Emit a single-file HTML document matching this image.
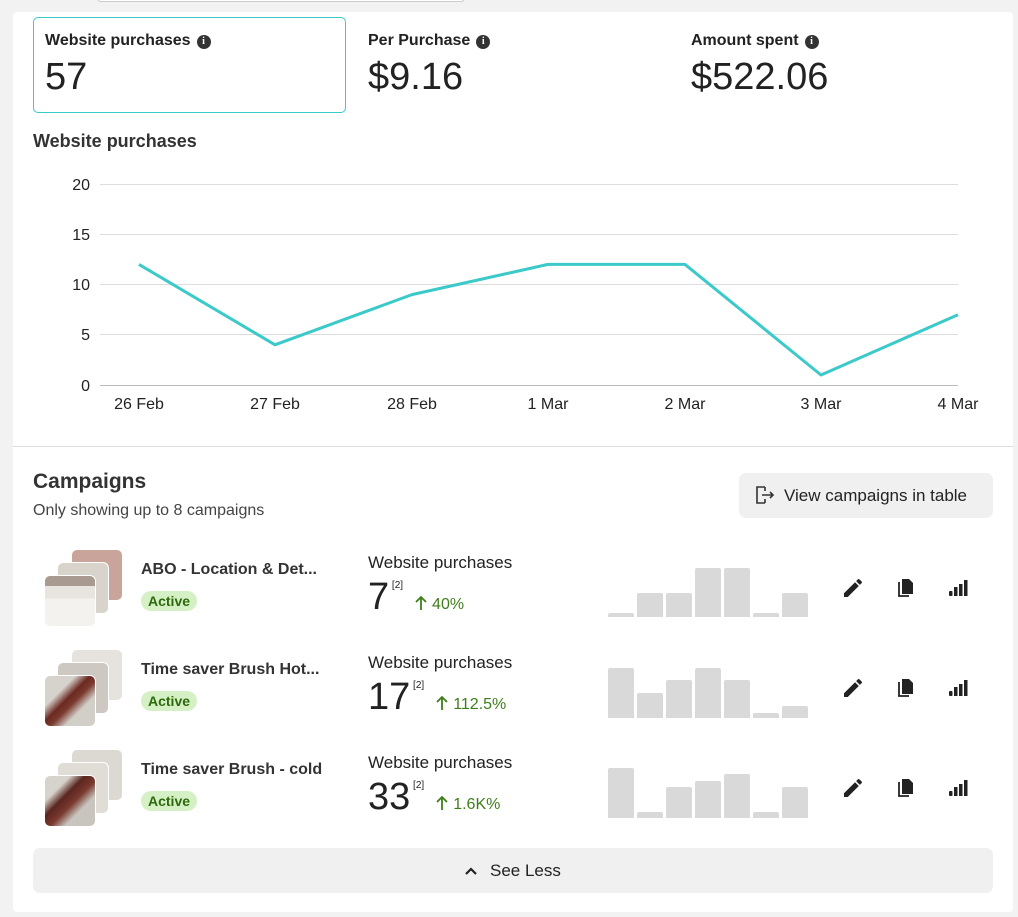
<!DOCTYPE html>
<html><head><meta charset="utf-8"><style>
*{margin:0;padding:0;box-sizing:border-box}
body{width:1018px;height:917px;background:#f2f2f2;font-family:"Liberation Sans",Roboto,sans-serif;color:#222;position:relative;overflow:hidden}
.a{position:absolute}
.card{left:13px;top:12px;width:1000px;height:900px;background:#fff;border-radius:4px}
.lbl{font-size:16px;font-weight:bold;color:#222}
.big{font-size:38px;color:#222}
.info{display:inline-block;width:14px;height:14px;border-radius:50%;background:#333;color:#fff;font-size:10px;text-align:center;line-height:14px;font-weight:bold;vertical-align:1px;margin-left:6px;font-family:"Liberation Serif",serif}
.bar{position:absolute;background:#d9d9d9;width:26px;border-radius:2px 2px 0 0}
.title{font-size:16px;font-weight:bold;color:#333}
.badge{background:#d5f0c4;color:#2d6a0e;font-size:14px;font-weight:bold;padding:2px 7px;border-radius:11px}
.wp{font-size:17px;color:#222}
.num{font-size:38px;color:#222}
.sup{font-size:10px;vertical-align:top;position:relative;top:4px}
.pct{font-size:16px;color:#3f7d1a}
.th{position:absolute;width:52px;height:52px;border-radius:6px;border:1.5px solid #fff}
</style></head><body>
<div class="a" style="left:97px;top:-10px;width:368px;height:12px;border:1px solid #ccc;border-radius:4px;background:#fff"></div>
<div class="a card"></div>
<div class="a" style="left:33px;top:17px;width:313px;height:96px;border:1px solid #3cc9c9;border-radius:5px"></div>
<div class="a lbl" style="left:45px;top:32px">Website purchases<span class="info">i</span></div>
<div class="a big" style="left:45px;top:56px">57</div>
<div class="a lbl" style="left:368px;top:32px">Per Purchase<span class="info">i</span></div>
<div class="a big" style="left:368px;top:56px">$9.16</div>
<div class="a lbl" style="left:691px;top:32px">Amount spent<span class="info">i</span></div>
<div class="a big" style="left:691px;top:56px">$522.06</div>
<div class="a" style="left:33px;top:131px;font-size:18px;font-weight:bold;color:#333">Website purchases</div>
<svg class="a" style="left:0;top:0" width="1018" height="447">
<g stroke="#ddd" stroke-width="1">
<line x1="100" y1="184.5" x2="958" y2="184.5"/><line x1="100" y1="234.5" x2="958" y2="234.5"/><line x1="100" y1="284.5" x2="958" y2="284.5"/><line x1="100" y1="334.5" x2="958" y2="334.5"/><line x1="100" y1="385.5" x2="958" y2="385.5" stroke="#bbb"/>
</g>
<g font-family="Liberation Sans,sans-serif" font-size="16" fill="#222" text-anchor="end">
<text x="90" y="190">20</text><text x="90" y="240">15</text><text x="90" y="290">10</text><text x="90" y="340">5</text><text x="90" y="391">0</text>
</g>
<g font-family="Liberation Sans,sans-serif" font-size="16" fill="#222" text-anchor="middle">
<text x="139" y="409">26 Feb</text><text x="275" y="409">27 Feb</text><text x="412" y="409">28 Feb</text><text x="548" y="409">1 Mar</text><text x="685" y="409">2 Mar</text><text x="821" y="409">3 Mar</text><text x="958" y="409">4 Mar</text>
</g>
<polyline fill="none" stroke="#3cc9c9" stroke-width="3" stroke-linejoin="round" points="139,264.4 275,344.8 412,294.6 548,264.4 685,264.4 821,375 958,314.7"/>
</svg>
<div class="a" style="left:13px;top:446px;width:1000px;height:1px;background:#ddd"></div>
<div class="a" style="left:33px;top:470px;font-size:21px;font-weight:bold;color:#333">Campaigns</div>
<div class="a" style="left:33px;top:502px;font-size:16px;color:#444">Only showing up to 8 campaigns</div>
<div class="a" style="left:739px;top:473px;width:254px;height:45px;background:#f0f0f0;border-radius:7px"></div>
<svg class="a" style="left:753px;top:484px" width="22" height="22" viewBox="0 0 22 22" fill="none" stroke="#333" stroke-width="1.6"><path d="M12 3H4v16h8M12 3v4M12 19v-4M9 11h11M17 8l3 3-3 3"/></svg>
<div class="a" style="left:784px;top:486px;font-size:17px;color:#222">View campaigns in table</div>

<div class="th" style="left:71px;top:549px;background:#c9a49a"></div>
<div class="th" style="left:57px;top:562px;background:#d8d4cc"></div>
<div class="th" style="left:44px;top:575px;background:linear-gradient(#a89a90 0 20%,#e8e5df 20% 45%,#f4f2ee 45%)"></div>
<div class="a title" style="left:141px;top:561px">ABO - Location &amp; Det...</div>
<div class="a badge" style="left:141px;top:591px">Active</div>
<div class="a wp" style="left:368px;top:553px">Website purchases</div>
<div class="a num" style="left:368px;top:576px">7<sup class="sup"> [2]</sup> <span class="pct"><svg width="14" height="16" viewBox="0 0 14 16" style="vertical-align:-2px"><path d="M7 15V2M2 7l5-5 5 5" fill="none" stroke="#3f7d1a" stroke-width="1.8"/></svg> 40%</span></div>

<div class="th" style="left:71px;top:649px;background:#e6e3de"></div>
<div class="th" style="left:57px;top:662px;background:#cdc8c1"></div>
<div class="th" style="left:44px;top:675px;background:linear-gradient(135deg,#d6d2cc 30%,#6b2a22 45%,#7a3a2f 55%,#d2cec8 70%)"></div>
<div class="a title" style="left:141px;top:661px">Time saver Brush Hot...</div>
<div class="a badge" style="left:141px;top:691px">Active</div>
<div class="a wp" style="left:368px;top:653px">Website purchases</div>
<div class="a num" style="left:368px;top:676px">17<sup class="sup"> [2]</sup> <span class="pct"><svg width="14" height="16" viewBox="0 0 14 16" style="vertical-align:-2px"><path d="M7 15V2M2 7l5-5 5 5" fill="none" stroke="#3f7d1a" stroke-width="1.8"/></svg> 112.5%</span></div>

<div class="th" style="left:71px;top:749px;background:#dcd8d2"></div>
<div class="th" style="left:57px;top:762px;background:#e0dcd6"></div>
<div class="th" style="left:44px;top:775px;background:linear-gradient(135deg,#d6d2cc 25%,#5a2620 40%,#7a3a2f 55%,#c8c4be 70%)"></div>
<div class="a title" style="left:141px;top:761px">Time saver Brush - cold</div>
<div class="a badge" style="left:141px;top:791px">Active</div>
<div class="a wp" style="left:368px;top:753px">Website purchases</div>
<div class="a num" style="left:368px;top:776px">33<sup class="sup"> [2]</sup> <span class="pct"><svg width="14" height="16" viewBox="0 0 14 16" style="vertical-align:-2px"><path d="M7 15V2M2 7l5-5 5 5" fill="none" stroke="#3f7d1a" stroke-width="1.8"/></svg> 1.6K%</span></div>

<div class="bar" style="left:608px;top:613px;height:4px"></div>
<div class="bar" style="left:637px;top:593px;height:24px"></div>
<div class="bar" style="left:666px;top:593px;height:24px"></div>
<div class="bar" style="left:695px;top:568px;height:49px"></div>
<div class="bar" style="left:724px;top:568px;height:49px"></div>
<div class="bar" style="left:753px;top:613px;height:4px"></div>
<div class="bar" style="left:782px;top:593px;height:24px"></div>
<div class="bar" style="left:608px;top:668px;height:50px"></div>
<div class="bar" style="left:637px;top:693px;height:25px"></div>
<div class="bar" style="left:666px;top:680px;height:38px"></div>
<div class="bar" style="left:695px;top:668px;height:50px"></div>
<div class="bar" style="left:724px;top:680px;height:38px"></div>
<div class="bar" style="left:753px;top:713px;height:5px"></div>
<div class="bar" style="left:782px;top:706px;height:12px"></div>
<div class="bar" style="left:608px;top:768px;height:50px"></div>
<div class="bar" style="left:637px;top:812px;height:6px"></div>
<div class="bar" style="left:666px;top:787px;height:31px"></div>
<div class="bar" style="left:695px;top:781px;height:37px"></div>
<div class="bar" style="left:724px;top:774px;height:44px"></div>
<div class="bar" style="left:753px;top:812px;height:6px"></div>
<div class="bar" style="left:782px;top:787px;height:31px"></div>

<svg width="0" height="0" style="position:absolute"><defs>
<g id="pen"><path d="M3 17.25V21h3.75L17.81 9.94l-3.75-3.75L3 17.25zM20.71 7.04a1 1 0 000-1.41l-2.34-2.34a1 1 0 00-1.41 0l-1.83 1.83 3.75 3.75 1.83-1.83z" fill="#222"/></g>
<g id="dup"><path d="M9 3h7l4 4v11H9z" fill="#222"/><path d="M6 6v14h10" fill="none" stroke="#222" stroke-width="1.8"/></g>
<g id="ch"><rect x="3" y="15" width="3.5" height="5" rx="1" fill="#222"/><rect x="8" y="11" width="3.5" height="9" fill="#222"/><rect x="13" y="8" width="3.5" height="12" fill="#222"/><rect x="18" y="4" width="3.5" height="16" fill="#222"/></g>
</defs></svg>
<svg class="a" style="left:841px;top:576px" width="24" height="24"><use href="#pen"/></svg>
<svg class="a" style="left:893px;top:576px" width="24" height="24"><use href="#dup"/></svg>
<svg class="a" style="left:946px;top:576px" width="24" height="24"><use href="#ch"/></svg>
<svg class="a" style="left:841px;top:676px" width="24" height="24"><use href="#pen"/></svg>
<svg class="a" style="left:893px;top:676px" width="24" height="24"><use href="#dup"/></svg>
<svg class="a" style="left:946px;top:676px" width="24" height="24"><use href="#ch"/></svg>
<svg class="a" style="left:841px;top:776px" width="24" height="24"><use href="#pen"/></svg>
<svg class="a" style="left:893px;top:776px" width="24" height="24"><use href="#dup"/></svg>
<svg class="a" style="left:946px;top:776px" width="24" height="24"><use href="#ch"/></svg>

<div class="a" style="left:33px;top:848px;width:960px;height:45px;background:#f0f0f0;border-radius:7px"></div>
<svg class="a" style="left:463px;top:863px" width="16" height="16"><path d="M3 11l5-5 5 5" fill="none" stroke="#222" stroke-width="2.2"/></svg>
<div class="a" style="left:490px;top:861px;font-size:17px;color:#222">See Less</div>
</body></html>
